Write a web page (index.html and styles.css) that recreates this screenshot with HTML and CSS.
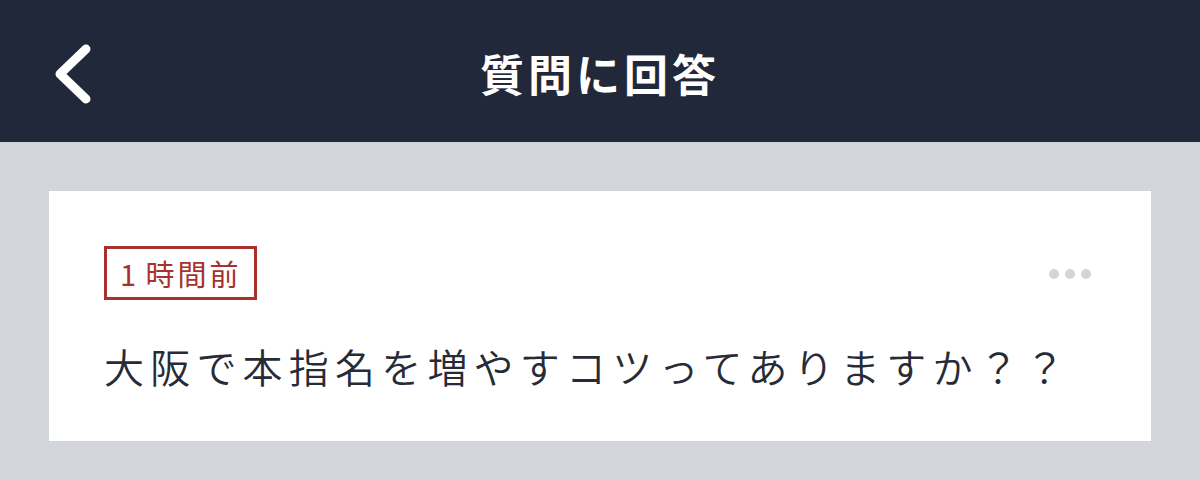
FILE: index.html
```html
<!DOCTYPE html>
<html lang="ja">
<head>
  <meta charset="UTF-8">
  <title>質問に回答</title>
  <link rel="stylesheet" href="styles.css">
</head>
<body>

<header class="topbar">
  <a href="#" class="back" title="戻る">
    <svg width="44" height="66" viewBox="0 0 44 66">
      <polyline points="36,8 10,33 36,58" fill="none" stroke="#fff" stroke-width="9" stroke-linecap="round" stroke-linejoin="round"/>
    </svg>
  </a>
  <h1>質問に回答</h1>
</header>

<main class="content">
  <section class="question">
    <div class="question-head">
      <span class="badge">1 時間前</span>
      <span class="more"><i></i><i></i><i></i></span>
    </div>
    <p class="question-text">大阪で本指名を増やすコツってありますか？？</p>
  </section>
</main>

</body>
</html>
```

FILE: styles.css
```css
body {
  margin: 0;
  background: #d2d5da;
  font-family: "Noto Sans CJK JP", "Noto Sans", sans-serif;
  color: #262b36;
}

.topbar {
  position: relative;
  height: 142px;
  background: #202839;
  display: flex;
  align-items: center;
  justify-content: center;
}

.back {
  position: absolute;
  left: 50px;
  top: 41px;
  display: block;
}

.back svg {
  display: block;
}

.topbar h1 {
  margin: 3px 0 0;
  color: #fff;
  font-size: 44px;
  font-weight: bold;
  letter-spacing: 4px;
}

.content {
  padding: 49px 49px 0;
}

.question {
  background: #fff;
  height: 250px;
  box-sizing: border-box;
  padding: 55px 60px 0 55px;
}

.question-head {
  display: flex;
  justify-content: space-between;
  align-items: center;
}

.badge {
  border: 3px solid #a8312e;
  color: #a8312e;
  font-size: 29px;
  font-weight: 400;
  line-height: 48px;
  padding: 0 12px 0 13px;
  letter-spacing: 3px;
  word-spacing: -3px;
}

.more {
  display: flex;
  gap: 6px;
  margin-top: 2px;
}

.more i {
  width: 10px;
  height: 10px;
  border-radius: 50%;
  background: #d3d3d8;
}

.question-text {
  margin: 38px 0 0;
  font-size: 40px;
  font-weight: 350;
  line-height: 56px;
  letter-spacing: 6.2px;
}
```
